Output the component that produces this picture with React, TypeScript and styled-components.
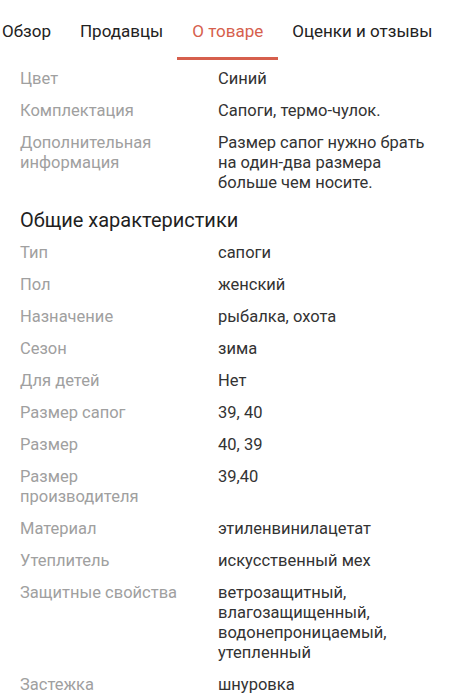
import React from 'react'
import styled, { createGlobalStyle } from 'styled-components'

const GlobalStyle = createGlobalStyle`
  html, body {
    margin: 0;
    padding: 0;
    background: #fff;
  }
  body {
    font-family: Roboto, "Noto Sans", "Liberation Sans", sans-serif;
    -webkit-font-smoothing: antialiased;
  }
`

const Page = styled.div`
  width: 455px;
  height: 699px;
  overflow: hidden;
  background: #fff;
`

const TabBar = styled.div`
  height: 63px;
  display: flex;
  align-items: flex-start;
  overflow: hidden;
  margin-left: -13px;
`

const Tab = styled.div<{ $active?: boolean }>`
  display: flex;
  align-items: center;
  padding: 4px 15px 0;
  margin-right: -1px;
  height: 60px;
  box-sizing: border-box;
  font-size: 17px;
  white-space: nowrap;
  color: ${p => (p.$active ? '#d65f4d' : '#222')};
  border-bottom: 3px solid ${p => (p.$active ? '#d65f4d' : 'transparent')};
`

const Section = styled.div`
  display: flex;
  flex-direction: column;
`

const Row = styled.div`
  display: grid;
  grid-template-columns: 198px 1fr;
  padding: 6px 16px 6px 20px;
  font-size: 16.5px;
  line-height: 20px;
`

const Label = styled.div`
  color: #a0a0a0;
  padding-right: 28px;
`

const Value = styled.div`
  color: #333;
`

const Heading = styled.h2`
  margin: 0;
  padding: 8px 20px 4px;
  font-size: 20px;
  font-weight: 400;
  line-height: 26px;
  color: #1f1f1f;
`

const tabs = ['Обзор', 'Продавцы', 'О товаре', 'Оценки и отзывы']

const top: [string, string][] = [
  ['Цвет', 'Синий'],
  ['Комплектация', 'Сапоги, термо-чулок.'],
  ['Дополнительная информация', 'Размер сапог нужно брать на один-два размера больше чем носите.'],
]

const general: [string, string][] = [
  ['Тип', 'сапоги'],
  ['Пол', 'женский'],
  ['Назначение', 'рыбалка, охота'],
  ['Сезон', 'зима'],
  ['Для детей', 'Нет'],
  ['Размер сапог', '39, 40'],
  ['Размер', '40, 39'],
  ['Размер производителя', '39,40'],
  ['Материал', 'этиленвинилацетат'],
  ['Утеплитель', 'искусственный мех'],
  ['Защитные свойства', 'ветрозащитный, влагозащищенный, водонепроницаемый, утепленный'],
  ['Застежка', 'шнуровка'],
]

const Props: React.FC<{ items: [string, string][] }> = ({ items }) => (
  <Section>
    {items.map(([l, v]) => (
      <Row key={l}>
        <Label>{l}</Label>
        <Value>{v}</Value>
      </Row>
    ))}
  </Section>
)

export default function App() {
  return (
    <>
      <GlobalStyle />
      <Page>
        <TabBar>
          {tabs.map(t => (
            <Tab key={t} $active={t === 'О товаре'}>
              {t}
            </Tab>
          ))}
        </TabBar>
        <Props items={top} />
        <Heading>Общие характеристики</Heading>
        <Props items={general} />
      </Page>
    </>
  )
}
